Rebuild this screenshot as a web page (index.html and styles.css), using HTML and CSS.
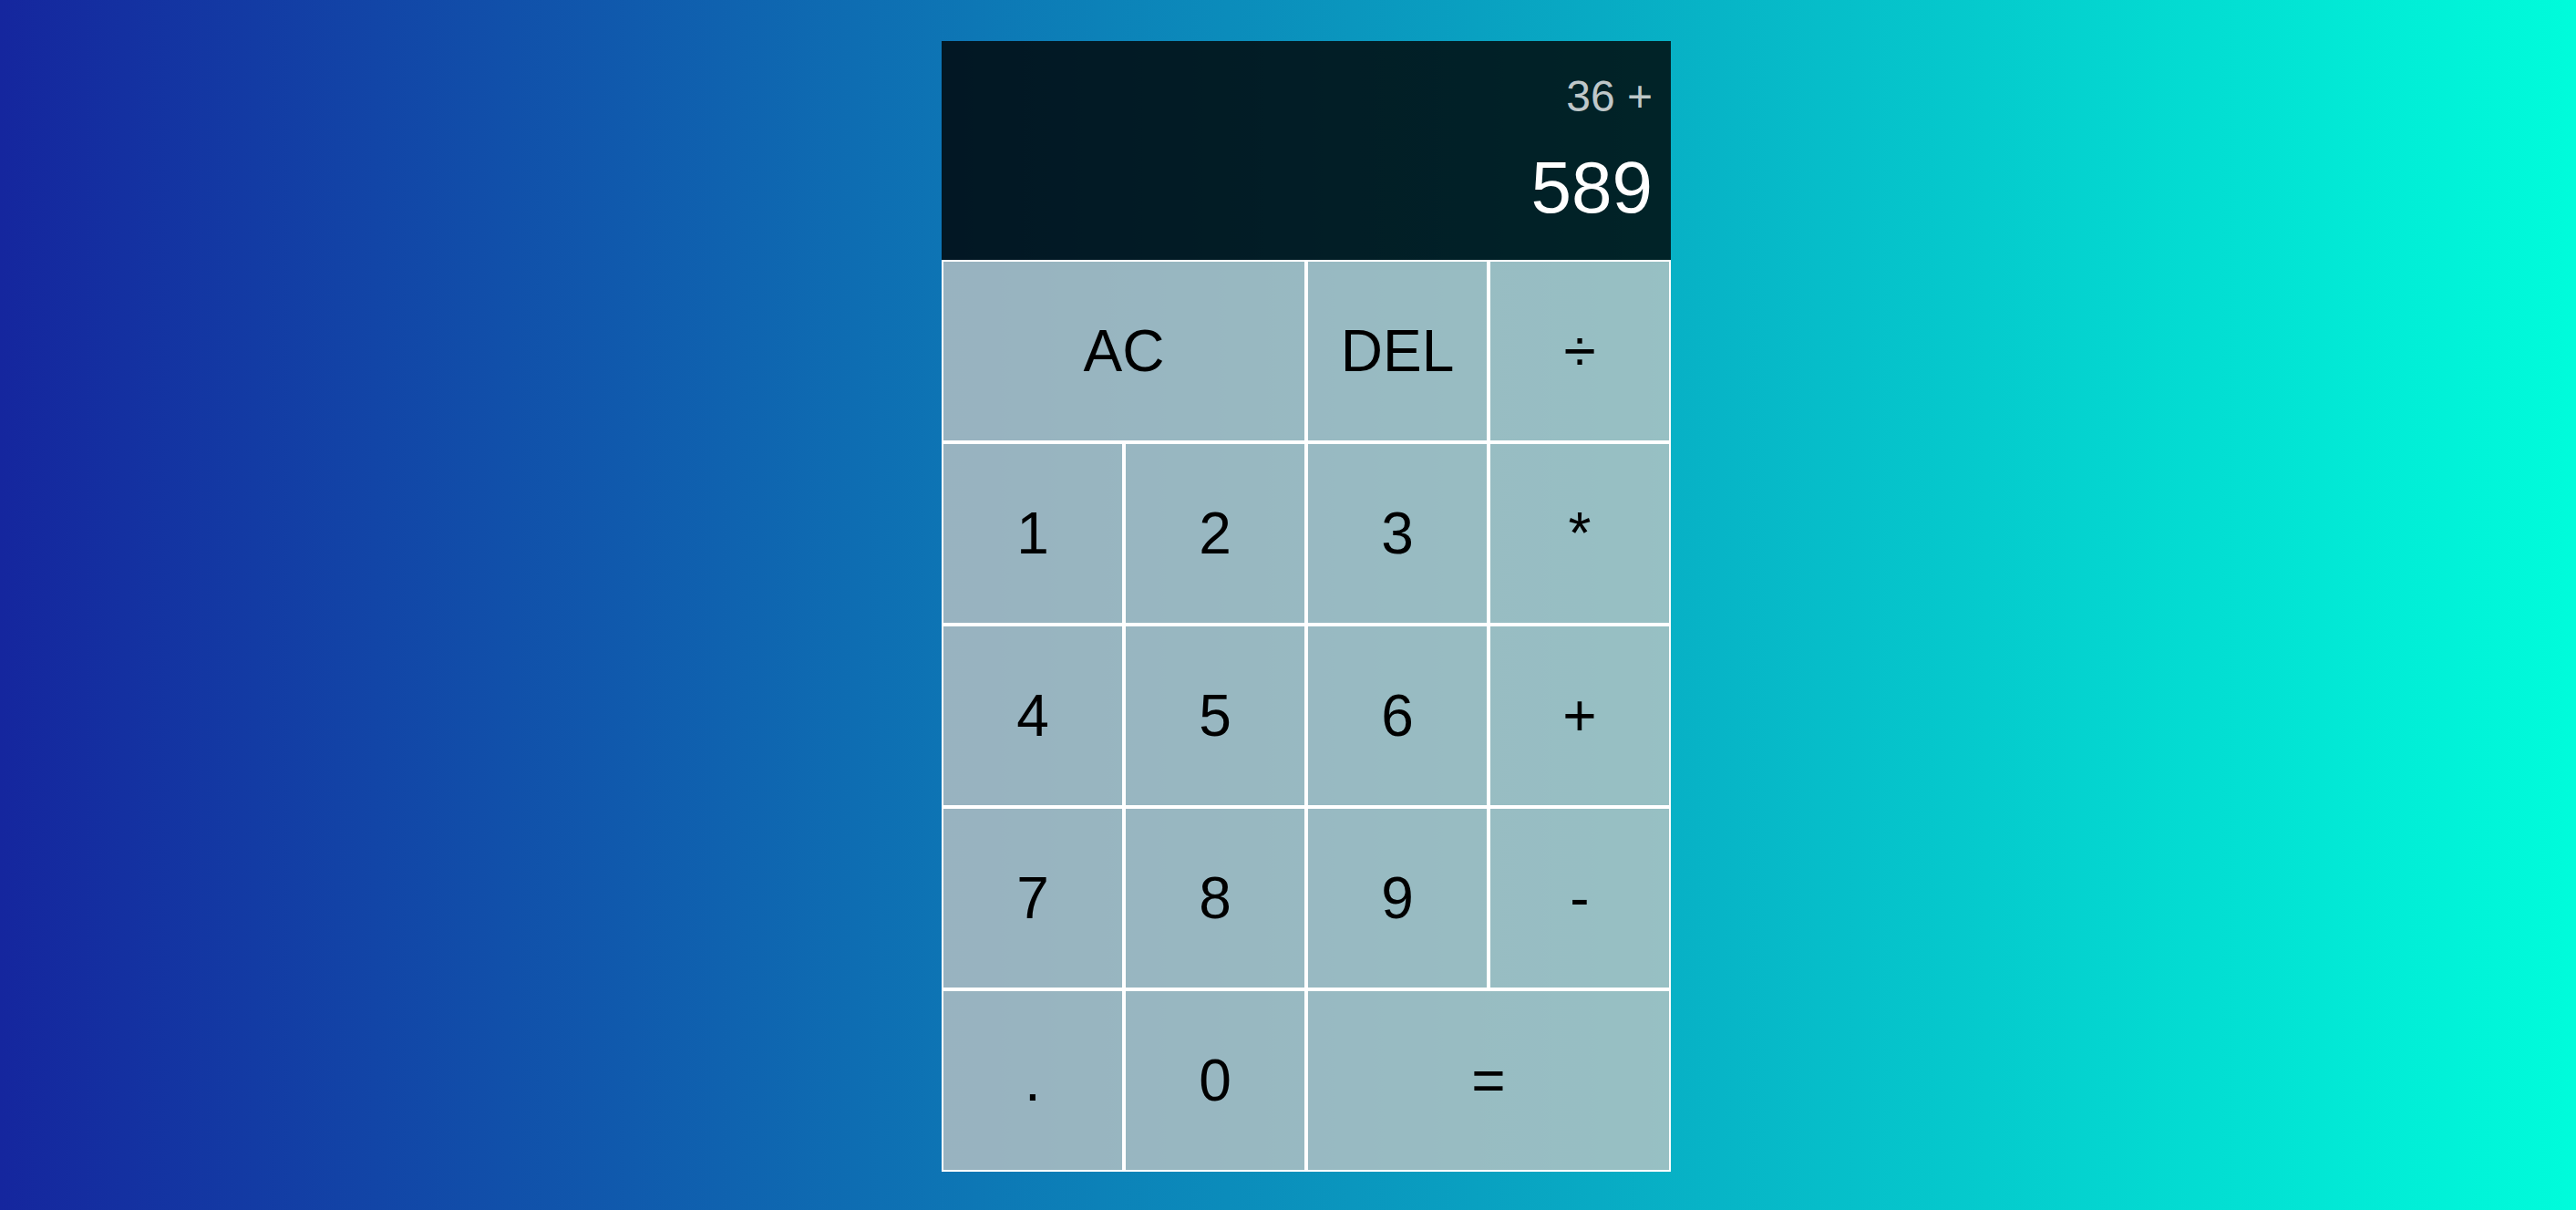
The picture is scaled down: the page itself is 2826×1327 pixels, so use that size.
FILE: index.html
```html
<!DOCTYPE html>
<html lang="en">
<head>
<meta charset="UTF-8">
<title>Calculator</title>
<link rel="stylesheet" href="styles.css">
</head>
<body>
<div class="calculator-grid">
  <div class="output">
    <div class="previous-operand">36 +</div>
    <div class="current-operand">589</div>
  </div>
  <button class="span-two">AC</button>
  <button>DEL</button>
  <button>÷</button>
  <button>1</button>
  <button>2</button>
  <button>3</button>
  <button>*</button>
  <button>4</button>
  <button>5</button>
  <button>6</button>
  <button>+</button>
  <button>7</button>
  <button>8</button>
  <button>9</button>
  <button>-</button>
  <button>.</button>
  <button>0</button>
  <button class="span-two">=</button>
</div>
</body>
</html>
```

FILE: styles.css
```css
*, *::before, *::after {
  box-sizing: border-box;
  font-family: "Liberation Sans", Arial, sans-serif;
  font-weight: normal;
}

html, body {
  margin: 0;
  padding: 0;
}

body {
  min-height: 100vh;
  background: linear-gradient(to right, #15269e, #00fcdb);
}

.calculator-grid {
  display: grid;
  justify-content: center;
  padding-top: 45px;
  padding-left: 40px;
  grid-template-columns: repeat(4, 200px);
  grid-template-rows: 240px repeat(5, 200px);
}

.calculator-grid > button {
  cursor: pointer;
  font-size: 64px;
  border: 2px solid #ffffff;
  outline: none;
  margin: 0;
  padding: 0;
  color: #000;
  background-color: rgba(192, 196, 195, 0.78);
}

.span-two {
  grid-column: span 2;
}

.output {
  grid-column: 1 / -1;
  background-color: rgba(0, 0, 0, 0.8);
  display: flex;
  flex-direction: column;
  align-items: flex-end;
  justify-content: space-around;
  padding: 20px;
  word-wrap: break-word;
  word-break: break-all;
}

.previous-operand {
  color: rgba(255, 255, 255, 0.75);
  font-size: 48px;
}

.current-operand {
  color: #ffffff;
  font-size: 80px;
}
```
